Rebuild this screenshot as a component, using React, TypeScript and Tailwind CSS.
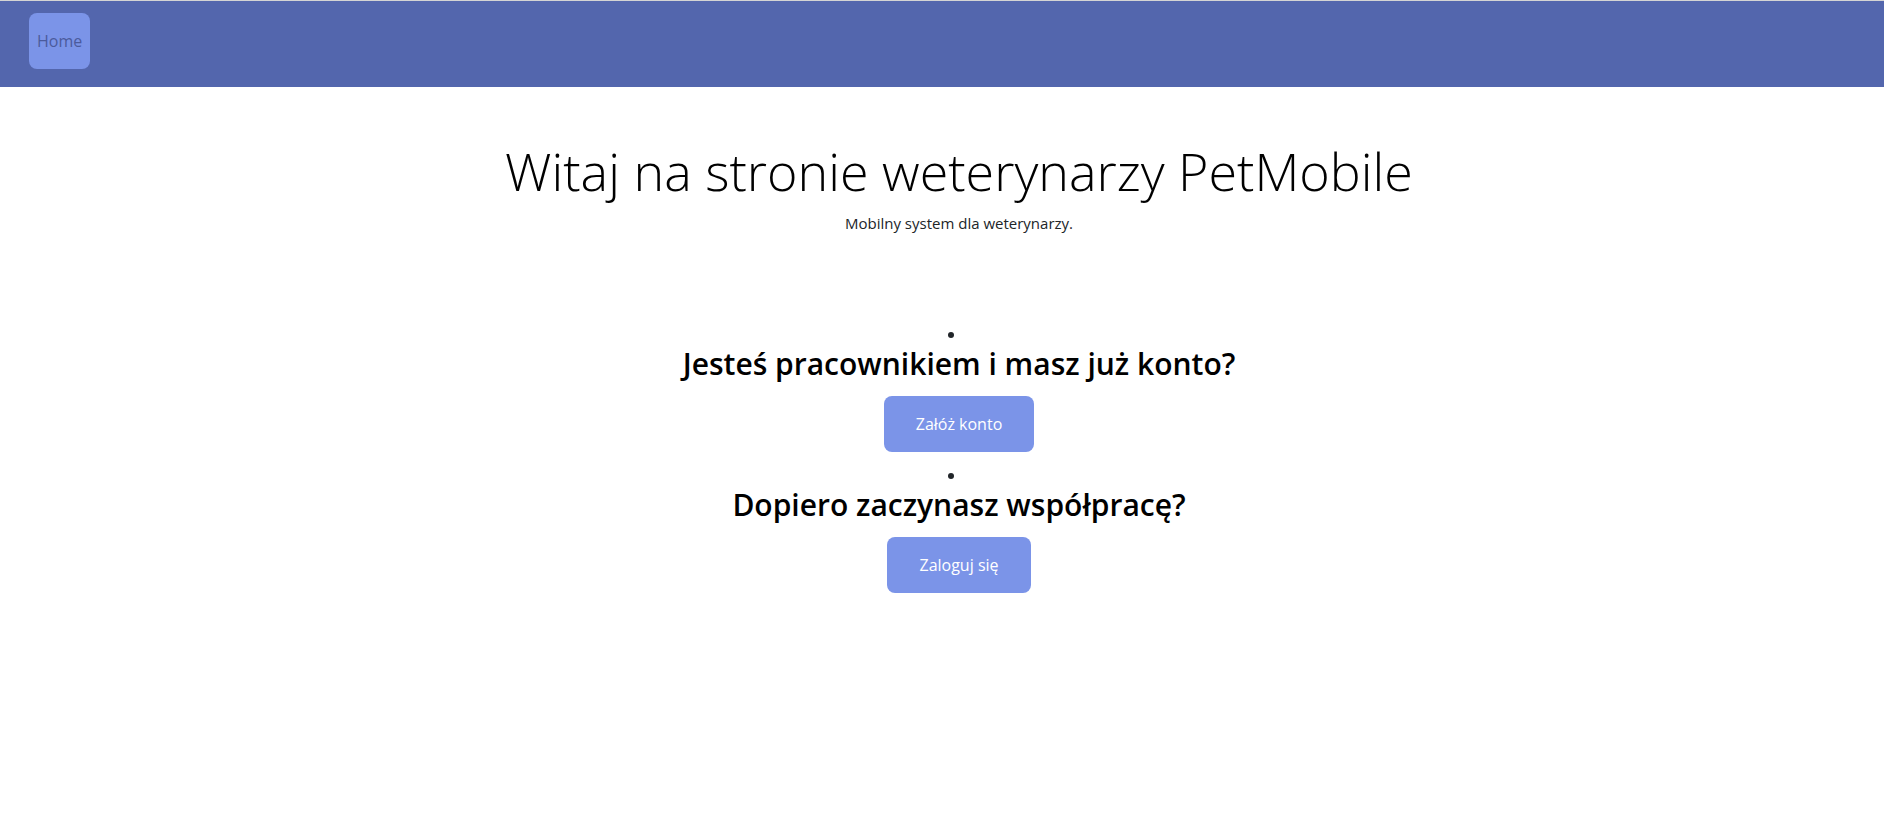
import React from 'react';

const items = [
  { question: 'Jesteś pracownikiem i masz już konto?', action: 'Załóż konto' },
  { question: 'Dopiero zaczynasz współpracę?', action: 'Zaloguj się' },
];

export default function App() {
  return (
    <div className="min-h-screen bg-white text-[#212529] font-['Open_Sans',sans-serif]">
      <nav className="border-t border-[#d4d4d4] bg-[#5366ad] h-[87px] px-[29px] pt-[12px]">
        <a className="inline-block rounded-lg bg-[#7b94e8] px-2 py-4 text-base leading-6 text-[#4b5b9c]">
          Home
        </a>
      </nav>

      <main className="pl-[34px] text-center">
        <h1 className="mt-[53px] mb-[9px] text-[52px] font-light leading-[1.2] text-black">
          Witaj na stronie weterynarzy PetMobile
        </h1>
        <p className="text-[15px] leading-6">Mobilny system dla weterynarzy.</p>

        <ul className="mt-[87px] list-inside list-disc">
          {items.map((item) => (
            <li key={item.action} className="mb-[11px] leading-6">
              <h2 className="mb-[14px] text-[30px] font-semibold leading-[1.2] text-black">
                {item.question}
              </h2>
              <button className="rounded-lg bg-[#7b94e8] px-8 py-4 text-base leading-6 text-white">
                {item.action}
              </button>
            </li>
          ))}
        </ul>
      </main>
    </div>
  );
}
